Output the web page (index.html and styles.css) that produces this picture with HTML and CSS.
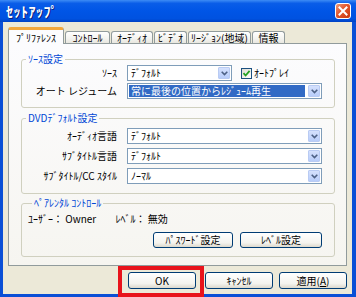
FILE: index.html
```html
<!DOCTYPE html>
<html lang="ja">
<head>
  <meta charset="UTF-8">
  <title>ｾｯﾄｱｯﾌﾟ</title>
  <link rel="stylesheet" href="styles.css">
</head>
<body>
  <div class="window">
    <div class="titlebar">
      <span class="title">ｾｯﾄｱｯﾌﾟ</span>
      <span class="close">
        <svg width="10" height="10" viewBox="0 0 10 10"><path d="M1.5 1.5L8.5 8.5M8.5 1.5L1.5 8.5" stroke="#fff" stroke-width="2" stroke-linecap="square"/></svg>
      </span>
    </div>
    <div class="frame">
      <div class="tabs">
        <div class="tab active">ﾌﾟﾘﾌｧﾚﾝｽ</div>
        <div class="tab tab-control">ｺﾝﾄﾛｰﾙ</div>
        <div class="tab tab-audio">ｵｰﾃﾞｨｵ</div>
        <div class="tab tab-video">ﾋﾞﾃﾞｵ</div>
        <div class="tab tab-region">ﾘｰｼﾞｮﾝ(地域)</div>
        <div class="tab tab-info">情報</div>
      </div>
      <div class="panel">
        <!-- ソース -->
        <fieldset class="group group-source">
          <legend>ｿｰｽ設定</legend>
          <div class="row">
            <span class="label">ｿｰｽ</span>
            <div class="field">
              <div class="combo combo-short">
                <span class="value">ﾃﾞﾌｫﾙﾄ</span>
                <span class="arrow"><svg width="7" height="5" viewBox="0 0 7 5"><path d="M0.7 0.7L3.5 3.5L6.3 0.7" fill="none" stroke="#4d6185" stroke-width="1.6"/></svg></span>
              </div>
              <span class="check"><svg width="9" height="9" viewBox="0 0 9 9"><path d="M1.5 4.2L3.6 6.5L7.6 1.8" fill="none" stroke="#21a121" stroke-width="1.8"/></svg></span>
              <span class="check-text">ｵｰﾄﾌﾟﾚｲ</span>
            </div>
          </div>
          <div class="row">
            <span class="label">オート レジューム</span>
            <div class="combo">
              <span class="value selected">常に最後の位置からﾚｼﾞｭｰﾑ再生</span>
              <span class="arrow"><svg width="7" height="5" viewBox="0 0 7 5"><path d="M0.7 0.7L3.5 3.5L6.3 0.7" fill="none" stroke="#4d6185" stroke-width="1.6"/></svg></span>
            </div>
          </div>
        </fieldset>

        <!-- DVD -->
        <fieldset class="group group-dvd">
          <legend>DVDﾃﾞﾌｫﾙﾄ設定</legend>
          <div class="row">
            <span class="label">ｵｰﾃﾞｨｵ言語</span>
            <div class="combo">
              <span class="value">ﾃﾞﾌｫﾙﾄ</span>
              <span class="arrow"><svg width="7" height="5" viewBox="0 0 7 5"><path d="M0.7 0.7L3.5 3.5L6.3 0.7" fill="none" stroke="#4d6185" stroke-width="1.6"/></svg></span>
            </div>
          </div>
          <div class="row">
            <span class="label">ｻﾌﾞﾀｲﾄﾙ言語</span>
            <div class="combo">
              <span class="value">ﾃﾞﾌｫﾙﾄ</span>
              <span class="arrow"><svg width="7" height="5" viewBox="0 0 7 5"><path d="M0.7 0.7L3.5 3.5L6.3 0.7" fill="none" stroke="#4d6185" stroke-width="1.6"/></svg></span>
            </div>
          </div>
          <div class="row">
            <span class="label">ｻﾌﾞﾀｲﾄﾙ/CC ｽﾀｲﾙ</span>
            <div class="combo">
              <span class="value">ﾉｰﾏﾙ</span>
              <span class="arrow"><svg width="7" height="5" viewBox="0 0 7 5"><path d="M0.7 0.7L3.5 3.5L6.3 0.7" fill="none" stroke="#4d6185" stroke-width="1.6"/></svg></span>
            </div>
          </div>
        </fieldset>

        <!-- ペアレンタル -->
        <fieldset class="group group-parent">
          <legend>ﾍﾟｱﾚﾝﾀﾙ ｺﾝﾄﾛｰﾙ</legend>
          <div class="info">
            <span>ﾕｰｻﾞｰ： Owner</span>
            <span class="level">ﾚﾍﾞﾙ： 無効</span>
          </div>
          <div class="group-buttons">
            <div class="btn btn-pass">ﾊﾟｽﾜｰﾄﾞ設定</div>
            <div class="btn btn-level">ﾚﾍﾞﾙ設定</div>
          </div>
        </fieldset>
      </div>
      <div class="buttons">
        <div class="btn btn-main ok">OK</div>
        <div class="btn btn-main">ｷｬﾝｾﾙ</div>
        <div class="btn btn-main">適用(<u>A</u>)</div>
      </div>
    </div>
  </div>
</body>
</html>
```
FILE: styles.css
```css
*{
  margin: 0;
  padding: 0;
  box-sizing: border-box;
}
html,body{
  width: 100%;
  height: 100%;
  background: #fff;
}
body{
  font-family: "Noto Sans CJK JP", sans-serif;
  font-size: 10px;
  line-height: 12px;
  color: #000;
}
.window{
  width: 356px;
  height: 297px;
  display: flex;
  flex-direction: column;
  overflow: hidden;
}

/* タイトルバー */
.titlebar{
  height: 22px;
  flex: none;
  display: flex;
  align-items: center;
  justify-content: space-between;
  padding: 0 5px 0 6px;
  background: linear-gradient(#3d8cf5 0%, #0a5de8 15%, #0055e6 50%, #0052e0 85%, #0042c4 100%);
}
.title{
  color: #fff;
  font-size: 14px;
  font-weight: bold;
  letter-spacing: 0.5px;
  text-shadow: 1px 1px 0 #0a1f7a;
}
.close{
  width: 16px;
  height: 16px;
  border: 1px solid #fff;
  border-radius: 3px;
  display: flex;
  align-items: center;
  justify-content: center;
  background: linear-gradient(135deg, #f09a7c 0%, #e2562c 45%, #c7380f 100%);
}

.frame{
  flex: 1;
  background: #ece9d8;
  border-left: 3px solid #0a4fd6;
  border-right: 4px solid #0a4fd6;
  border-bottom: 3px solid #0a4fd6;
  padding: 5px 5px 0 5px;
}

/* タブ */
.tabs{
  height: 16px;
  display: flex;
  align-items: flex-end;
}
.tab{
  height: 12px;
  margin-left: 1px;
  display: flex;
  align-items: center;
  justify-content: center;
  white-space: nowrap;
  border: 1px solid #919b9c;
  border-bottom: none;
  border-radius: 3px 3px 0 0;
  background: linear-gradient(#fff, #f3f3ef 60%, #e8e7e0);
}
.tab.active{
  width: 56px;
  height: 17px;
  margin-left: 0;
  margin-bottom: -1px;
  position: relative;
  z-index: 1;
  padding-top: 1px;
  border-top: 3px solid #f3a83c;
  background: #fcfcfe;
}
.tab-control{ width: 45px; }
.tab-audio{ width: 42px; }
.tab-video{ width: 33px; }
.tab-region{ width: 63px; }
.tab-info{ width: 33px; }

.panel{
  border: 1px solid #919b9c;
  background: linear-gradient(#fcfcfe, #f6f5f0);
  padding: 9px 11px 8px 12px;
}

/* グループ */
.group{
  border: 1px solid #d0d0bf;
  border-radius: 3px;
  padding: 0 12px 0 0;
  min-width: 0;
}
.group legend{
  color: #0046d5;
  margin-left: 4px;
  padding: 0 2px;
  line-height: 12px;
}
.group-source{
  padding-bottom: 8px;
}
.group-dvd{
  margin-top: 4px;
  padding-top: 4px;
  padding-bottom: 9px;
}
.group-parent{
  margin-top: 3px;
  padding: 4px 12px 8px 6px;
}
.group-source .row + .row{
  margin-top: 2px;
}
.group-dvd .row + .row{
  margin-top: 4px;
}
.row{
  display: grid;
  grid-template-columns: 95px 1fr;
  column-gap: 10px;
  align-items: center;
}
.label{
  text-align: right;
  white-space: nowrap;
}
.field{
  display: flex;
  align-items: center;
}
.combo{
  height: 16px;
  border: 1px solid #7f9db9;
  background: #fff;
  display: flex;
  align-items: stretch;
  padding: 1px;
}
.combo-short{
  width: 105px;
}
.combo .value{
  flex: 1;
  padding-left: 2px;
  display: flex;
  align-items: center;
  white-space: nowrap;
  margin-right: 3px;
}
.combo .value.selected{
  background: #316ac5;
  color: #fff;
}
.arrow{
  width: 12px;
  display: flex;
  align-items: center;
  justify-content: center;
  border: 1px solid #b9cbf3;
  border-radius: 1px;
  background: linear-gradient(#d5e1fd, #b8cdfa);
}
.check{
  width: 11px;
  height: 11px;
  margin-left: 9px;
  border: 1px solid #1c5180;
  background: linear-gradient(135deg, #dcdcd4, #fff);
  display: flex;
  align-items: center;
  justify-content: center;
}
.check-text{
  margin-left: 2px;
}

.info{
  white-space: nowrap;
}
.info .level{
  margin-left: 17px;
}
.group-buttons{
  margin-top: 7px;
  display: flex;
  justify-content: flex-end;
  gap: 7px;
}

/* ボタン */
.btn{
  height: 16px;
  display: flex;
  align-items: center;
  justify-content: center;
  border: 1px solid #003c74;
  border-radius: 3px;
  background: linear-gradient(#fff, #f4f3ee 70%, #dcd8cc);
  white-space: nowrap;
}
.btn-pass{ width: 80px; }
.btn-level{ width: 82px; }

.buttons{
  margin-top: 6px;
  display: flex;
  justify-content: flex-end;
  gap: 6px;
}
.btn-main{
  width: 68px;
  height: 17px;
}
.btn-main u{
  text-decoration: underline;
}
.ok{
  margin-right: 3px;
  position: relative;
}
.ok::after{
  content: "";
  position: absolute;
  left: -11px;
  top: -7px;
  right: -9px;
  bottom: -9px;
  border: 4px solid #e8131b;
}
```
